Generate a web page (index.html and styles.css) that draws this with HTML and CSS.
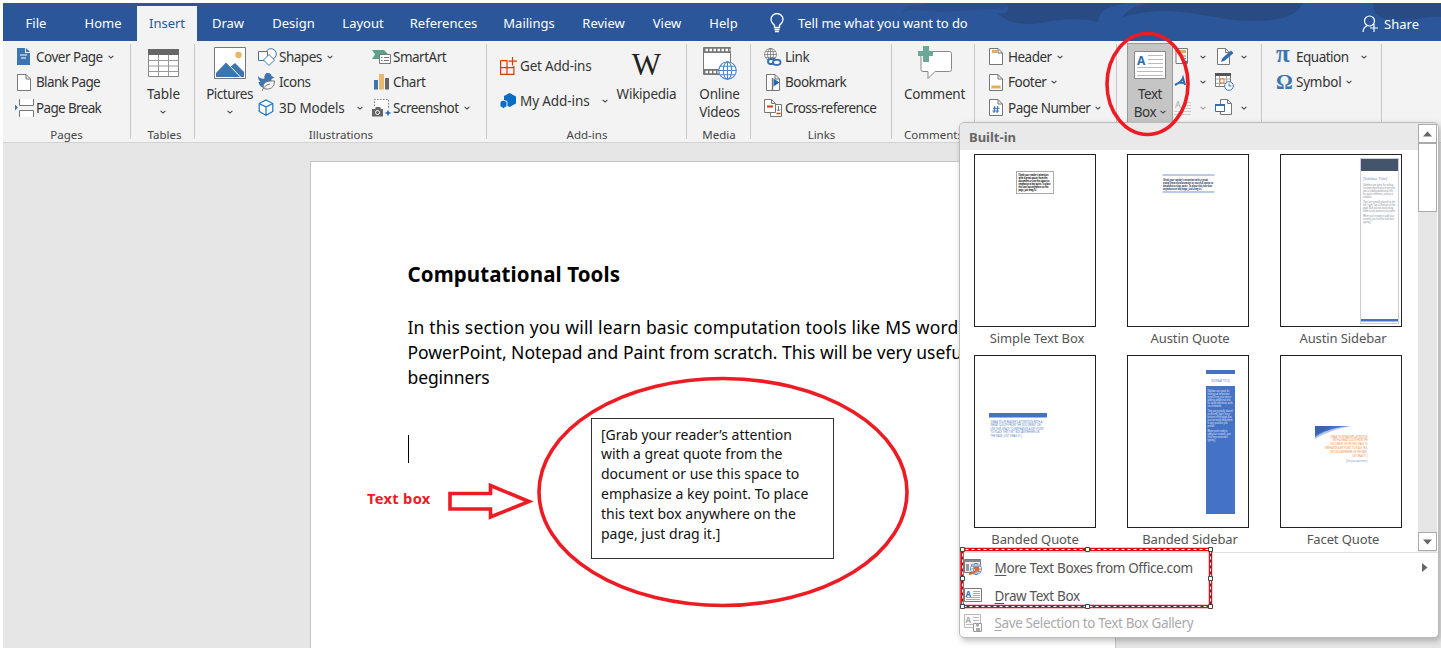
FILE: index.html
```html
<!DOCTYPE html>
<html lang="en">
<head>
<meta charset="utf-8">
<title>Computational Tools</title>
<link rel="stylesheet" href="styles.css">
</head>
<body>
<svg width="0" height="0" class="defs">
  <symbol id="caret" viewBox="0 0 6 4"><path d="M.6.8 3 3.1 5.400.8" fill="none" stroke="#444" stroke-width="1.1"/></symbol>
  <symbol id="doc" viewBox="0 0 14 17"><path d="M.5.5h8.500l4.500 4.500v11.500H.5zM9 .5V5h4.500" fill="#fff" stroke="#777"/></symbol>
  <symbol id="globe" viewBox="0 0 18 18"><circle cx="9" cy="9" r="8.300" fill="#fff"/><g fill="none" stroke="currentColor"><circle cx="9" cy="9" r="8.300"/><ellipse cx="9" cy="9" rx="4" ry="8.300"/><path d="M9 .7v16.600M.7 9h16.600M2 5h14M2 13h14"/></g></symbol>
</svg>
<div class="app">
  <nav class="tabs">
    <span class="tab w66">File</span><span class="tab w68">Home</span><span class="tab w60 active">Insert</span><span class="tab w62">Draw</span><span class="tab w69">Design</span><span class="tab w70">Layout</span><span class="tab w91">References</span><span class="tab w80">Mailings</span><span class="tab w69">Review</span><span class="tab w58">View</span><span class="tab w55">Help</span>
    <svg class="bulb" width="14" height="20" viewBox="0 0 14 20"><path d="M4.500 14.500v-2C3 10.500 1 9.500 1 6.500a6 6 0 0 1 12 0c0 3-2 4-3.500 6v2zM4.500 16.500h5M5 18.500h4" fill="none" stroke="#fff" stroke-width="1.300"/></svg>
    <span class="tell">Tell me what you want to do</span>
    <svg class="share-icon" width="17" height="18" viewBox="0 0 17 18"><g fill="none" stroke="#fff" stroke-width="1.200"><circle cx="7.500" cy="6" r="5"/><path d="M1 17c0-3 1.500-5 4-6.300M12 9v8M8 13h8"/></g></svg>
    <span class="share">Share</span>
    <svg class="swirl" width="540" height="38" viewBox="0 0 540 38"><g fill="#284b84"><path d="M1 9C3 3 12 2 22 2L30 0h78l-6 7C80 4 60 9 40 9 28 9 12 5 1 9z" opacity=".6"/><path d="M97 10c6 2 14-1 8-10h120c-12 3-26 4-28 19-20-5-40-2-58 1-22 3-36-2-42-10z"/><path d="M221 15C225 6 240 0 255 0h146c-2 9-14 17-42 18-30 2-60-9-92-10-18 0-34 2-46 7z"/><path d="M472 0h68v14c-14-1-24 3-36 3-18 1-33-2-32-17z"/></g></svg>
  </nav>

  <section class="ribbon">
    <div class="group pages">
      <div class="rows">
        <div class="row"><i class="in"><svg width="14" height="17" viewBox="0 0 14 17"><path d="M0 0h8v5h5v12H0z" fill="#3d75b0"/><path d="M9 0l4 4H9z" fill="#3d75b0"/><path d="M3 7h7M4 10h5" stroke="#fff"/></svg></i><b>Cover Page</b><svg class="c"><use href="#caret"/></svg></div>
        <div class="row"><i class="in"><svg width="14" height="17"><use href="#doc"/></svg></i><b class="tight">Blank Page</b></div>
        <div class="row"><i><svg width="19" height="18" viewBox="0 0 19 18"><path d="M4.500 0v6.500h14V0M4.500 18v-6.500h14V18" fill="#fff" stroke="#777"/><path d="M0 5.500 3 8.500 0 11.500z" fill="#3d75b0"/></svg></i><b class="tight">Page Break</b></div>
      </div>
      <h2>Pages</h2>
    </div>
    <div class="group tables">
      <div class="big"><div class="art"><svg width="31" height="28" viewBox="0 0 31 28"><path d="M.5.5h30v27H.5z" fill="#fff" stroke="#888"/><path d="M0 0h31v6H0z" fill="#666"/><path d="M.5 11.500h30M.5 17h30M.5 22.500h30M10.500 6v21M20.500 6v21" stroke="#999"/></svg></div><b class="nat">Table</b><svg class="c"><use href="#caret"/></svg></div>
      <h2>Tables</h2>
    </div>
    <div class="group illus">
      <div class="big"><div class="art"><svg width="32" height="32" viewBox="0 0 32 32"><path d="M.5.500h31v31H.5z" fill="#fff" stroke="#777"/><circle cx="24.500" cy="8" r="3.200" fill="#eab566"/><path d="M2 30V26L12 15.500 26 30z" fill="#3d75b0"/><path d="M16 20l5-4 9 9v5h-5z" fill="#3d75b0"/><path d="M16.500 19.500l10 10.500" stroke="#fff" fill="none"/></svg></div><b>Pictures</b><svg class="c"><use href="#caret"/></svg></div>
      <div class="rows c2">
        <div class="row"><i><svg width="19" height="18" viewBox="0 0 19 18"><g fill="#fff" stroke="#3d75b0"><circle cx="13" cy="6" r="5.300"/><path d="M.5 3.500h9v9h-9z"/><path d="M11 6.500l5.500 5.500-5.500 5.500L5.500 12z"/></g></svg></i><b>Shapes</b><svg class="c"><use href="#caret"/></svg></div>
        <div class="row"><i><svg width="18" height="18" viewBox="0 0 18 18"><path d="M0 3c2 2.500 4 3 6.500 2.500C6 2 7.500 0 10 0s3.500 1.500 3.500 3l3 1.500-3 1.500C14 12 11 15 8 15 3 15 1 12 .5 9h2C1 7.500 0 6 0 3z" fill="#3d75b0"/><path d="M5.500 15.500C4 10 8 7.500 16.500 8c0 6-4 9.500-11 7.500zM4 18c1.500-4 4-6 8-7" fill="#f3f3f3" stroke="#777"/></svg></i><b>Icons</b></div>
        <div class="row"><i><svg width="16" height="17" viewBox="0 0 16 17"><path d="M8 1l6.800 3.500v8L8 16.300 1.200 12.500v-8zM1.200 4.500 8 8l6.800-3.500M8 8v8" fill="#fff" stroke="#1a73c0" stroke-width="1.200"/></svg></i><b class="models">3D Models</b><svg class="c far"><use href="#caret"/></svg></div>
      </div>
      <div class="rows c3">
        <div class="row"><i><svg width="19" height="14" viewBox="0 0 19 14"><path d="M0 0h12l4 4-3 5H0l3-4.500z" fill="#5ca28b"/><path d="M7.500 4.500h11v9h-11z" fill="#fff" stroke="#777"/><path d="M9 7.500h1.500M12 7.500h5M9 10.500h1.500M12 10.500h5" stroke="#777"/></svg></i><b>SmartArt</b></div>
        <div class="row"><i class="in"><svg width="15" height="16" viewBox="0 0 15 16"><path d="M0 6h4v9.500H0z" fill="#3d75b0"/><path d="M5 0h5v15.500H5z" fill="#e9b96e"/><path d="M11 4h4v11.500h-4z" fill="#666"/></svg></i><b>Chart</b></div>
        <div class="row"><i><svg width="19" height="18" viewBox="0 0 19 18"><path d="M2.500 7V.5h14V10" fill="#fff" stroke="#777" stroke-dasharray="1.500 1.500"/><path d="M0 10h3l1-2h4l1 2h2v7.500H0z" fill="#666"/><circle cx="5.500" cy="13.500" r="2" fill="#666" stroke="#fff"/><path d="M16 11.500v5M13.500 14h5" stroke="#2468b0" stroke-width="1.500"/></svg></i><b>Screenshot</b><svg class="c"><use href="#caret"/></svg></div>
      </div>
      <h2>Illustrations</h2>
    </div>
    <div class="group addins">
      <div class="rows two">
        <div class="row"><i><svg width="17" height="18" viewBox="0 0 17 18"><path d="M.6 3.600h6.400v13.800M.6 3.600v13.800h13.300v-6.800H.6M7 10.600V17M13.900 10.600V9M12.500 0v8.500M8.500 4.200h8.500" fill="none" stroke="#d83b01" stroke-width="1.200"/></svg></i><b class="ga1">Get Add-ins</b></div>
        <div class="row"><i><svg width="17" height="17" viewBox="0 0 17 17"><path d="M9.500 1l6.500 3.500v7L9.500 15 4 12V4z" fill="#0a6cc4"/><path d="M0 9.500l3-1.500 4 1.500v5L3.500 16.500 0 14.500z" fill="#0a6cc4" stroke="#f3f3f3"/></svg></i><b class="nat">My Add-ins</b><svg class="c far"><use href="#caret"/></svg></div>
      </div>
      <div class="big wiki"><div class="art"><span class="w">W</span></div><b class="slim">Wikipedia</b></div>
      <h2>Add-ins</h2>
    </div>
    <div class="group media">
      <div class="big"><div class="art"><svg width="34" height="33" viewBox="0 0 34 33"><path d="M.5.5h27v27H.5z" fill="#fff" stroke="#777"/><path d="M1 3h26M1 25h18" stroke="#777" stroke-width="4"/><path d="M2.500 3h25M2.500 25h18" stroke="#fff" stroke-width="2.500" stroke-dasharray="2.500 1.500"/><path d="M0 5.500h28M0 22.500h16" stroke="#777"/><svg x="15" y="14" width="19" height="19" color="#4f86bd"><use href="#globe"/></svg></svg></div><b class="slim">Online</b><b class="slim">Videos</b></div>
      <h2>Media</h2>
    </div>
    <div class="group links">
      <div class="rows">
        <div class="row"><i><svg width="18" height="18" viewBox="0 0 18 18"><svg width="13" height="13" color="#666"><use href="#globe"/></svg><g fill="#f3f3f3" stroke="#2f6fb0" stroke-width="1.800"><rect x="4" y="11" width="7.500" height="5" rx="2.500"/><rect x="9" y="11.800" width="7.500" height="5" rx="2.500"/></g></svg></i><b>Link</b></div>
        <div class="row"><i class="in"><svg width="14" height="17"><use href="#doc"/><path d="M6.500 4v12" stroke="#777" stroke-width="1.400"/><path d="M7.500 4.500l6 4-6 4z" fill="#2468b0"/></svg></i><b>Bookmark</b></div>
        <div class="row"><i><svg width="18" height="18" viewBox="0 0 18 18"><path d="M6.500 5.500h11v12h-11z" fill="#fff" stroke="#777"/><path d="M.5.5h7l4 4v9H.5zM7.500.5v4h4" fill="#fff" stroke="#777"/><path d="M3 7.500h6" stroke="#d83b01" stroke-width="2"/><path d="M12.500 14.500h4" stroke="#d83b01" stroke-width="1.500"/><path d="M14.500 7v5l-1.500-1.500m1.500 1.500 1.500-1.500" stroke="#777" fill="none"/></svg></i><b class="cross">Cross-reference</b></div>
      </div>
      <h2>Links</h2>
    </div>
    <div class="group comments">
      <div class="big"><div class="art"><svg width="34" height="34" viewBox="0 0 34 34"><path d="M3.500 5.500h28a2 2 0 0 1 2 2v16a2 2 0 0 1-2 2H17l-7 7v-7H5a2 2 0 0 1-2-2V5.500z" fill="#fff" stroke="#888"/><path d="M5 0h6v5h4v5h-4v6H5v-6H0V5h5z" fill="#6ca898"/></svg></div><b class="slim">Comment</b></div>
      <h2>Comments</h2>
    </div>
    <div class="group headfoot">
      <div class="rows">
        <div class="row"><i><svg width="14" height="17"><use href="#doc"/><path d="M3 3.500h5" stroke="#e8ad52" stroke-width="3"/></svg></i><b>Header</b><svg class="c"><use href="#caret"/></svg></div>
        <div class="row"><i><svg width="14" height="17"><use href="#doc"/><path d="M2.500 13h9" stroke="#e8ad52" stroke-width="3"/></svg></i><b>Footer</b><svg class="c"><use href="#caret"/></svg></div>
        <div class="row"><i><svg width="14" height="17"><use href="#doc"/><path d="M5.800 7 5 14M8.800 7 8 14M4 9.300h6.500M3.500 12H10" stroke="#2f6fb0"/></svg></i><b>Page Number</b><svg class="c"><use href="#caret"/></svg></div>
      </div>
    </div>
    <div class="group text">
      <div class="big pressed"><div class="art"><svg width="32" height="28" viewBox="0 0 32 28"><path d="M.5.5h31v27H.5z" fill="#fff" stroke="#888"/><text x="3" y="14" class="ga">A</text><path d="M14 4.500h15M14 8.500h15M14 12.500h15M3 16.500h26M3 20.500h26M3 24.500h26" stroke="#bbb"/></svg></div><b>Text</b><b>Box <svg class="c"><use href="#caret"/></svg></b></div>
      <div class="rows small">
        <div class="row"><i><svg width="17" height="17" viewBox="0 0 17 17"><path d="M2 .5h11.500v15H2z" fill="#fff" stroke="#777"/><path d="M1 3.500h11" stroke="#e8ad52" stroke-width="3"/><path d="M6 8h6M7 10.500h5" stroke="#777"/><path d="M8 14h5" stroke="#3d75b0" stroke-width="2.500"/></svg></i><svg class="c"><use href="#caret"/></svg></div>
        <div class="row"><i><svg width="17" height="17" viewBox="0 0 17 17"><path d="M1 11C5 9 8 7 9 4l2 7M5 8.500l5 .5" fill="none" stroke="#2f6fb0" stroke-width="2"/></svg></i><svg class="c"><use href="#caret"/></svg></div>
        <div class="row"><i><svg width="17" height="19" viewBox="0 0 17 19"><text x="1" y="10" class="dim">A</text><path d="M9 4.500h8M9 7.500h8M9 10.500h8M0 13.500h17M0 16.500h17" stroke="#ccc"/></svg></i><svg class="c light"><use href="#caret"/></svg></div>
      </div>
      <div class="rows small s2">
        <div class="row"><i class="in"><svg width="17" height="17" viewBox="0 0 17 17"><path d="M.5.5h8l4 4v12H.5zM8.500.5v4h4" fill="#fff" stroke="#777"/><path d="M4 14l1.500-4L14 2.500 16.500 5 8 12.500z" fill="#2f6fb0"/></svg></i><svg class="c"><use href="#caret"/></svg></div>
        <div class="row"><i><svg width="19" height="18" viewBox="0 0 19 18"><path d="M.5.5h15v13H.5z" fill="#fff" stroke="#777"/><path d="M0 1.500h16" stroke="#555" stroke-width="3"/><path d="M4.500 3v10M11.500 3v10M1 6h14M1 10.500h14" stroke="#aaa"/><path d="M5 6h4v4H5z" fill="#fff" stroke="#e07020"/><circle cx="14" cy="13" r="4.300" fill="#fff" stroke="#3d75b0"/><path d="M14 10.500V13h2.500" stroke="#3d75b0" fill="none"/></svg></i></div>
        <div class="row"><i><svg width="17" height="17" viewBox="0 0 17 17"><path d="M5.500.5h7l4 4v11h-11zM12.500.5v4h4" fill="#fff" stroke="#777"/><path d="M.5 5.500h9v7h-9z" fill="#fff" stroke="#2f6fb0"/><path d="M0 6h10" stroke="#2f6fb0" stroke-width="2"/></svg></i><svg class="c"><use href="#caret"/></svg></div>
      </div>
    </div>
    <div class="group symbols">
      <div class="rows">
        <div class="row"><i class="sym pi">π</i><b>Equation</b><svg class="c far"><use href="#caret"/></svg></div>
        <div class="row"><i class="sym">Ω</i><b class="slim">Symbol</b><svg class="c"><use href="#caret"/></svg></div>
      </div>
    </div>
  </section>

  <main class="workspace">
    <article class="page">
      <h1>Computational Tools</h1>
      <p class="body"><span class="l1">In this section you will learn basic computation tools like MS word,</span><br><span class="l2">PowerPoint, Notepad and Paint from scratch. This will be very useful</span><br><span class="l3">beginners</span></p>
      <div class="cursor"></div>
    </article>
  </main>

  <div class="quote">[Grab your reader’s attention<br>with a great quote from the<br>document or use this space to<br>emphasize a key point. To place<br>this text box anywhere on the<br>page, just drag it.]</div>
  <div class="note">Text box</div>

  <aside class="menu">
    <div class="menu-top">
      <div class="gallery">
        <h3>Built-in</h3>
        <div class="grid">
          <figure><svg width="122" height="173"><rect x="41.500" y="16.500" width="37" height="22" fill="#fff" stroke="#aaa"/><g class="t k"><text x="43.500" y="20.500" textLength="30" lengthAdjust="spacingAndGlyphs">[Grab your reader's attention</text><text x="43.500" y="23.600" textLength="29" lengthAdjust="spacingAndGlyphs">with a great quote from the</text><text x="43.500" y="26.700" textLength="31" lengthAdjust="spacingAndGlyphs">document or use this space to</text><text x="43.500" y="29.800" textLength="32" lengthAdjust="spacingAndGlyphs">emphasize a key point. To place</text><text x="43.500" y="32.900" textLength="30" lengthAdjust="spacingAndGlyphs">this text box anywhere on the</text><text x="43.500" y="36" textLength="18" lengthAdjust="spacingAndGlyphs">page, just drag it.]</text></g></svg><figcaption>Simple Text Box</figcaption></figure>
          <figure><svg width="122" height="173"><path d="M34.500 20h52M34.500 37h52" stroke="#a3bbe2" stroke-width="1.500"/><g class="t n"><text x="35" y="25.500" textLength="45" lengthAdjust="spacingAndGlyphs">[Grab your reader's attention with a great</text><text x="35" y="28.800" textLength="50" lengthAdjust="spacingAndGlyphs">quote from the document or use this space to</text><text x="35" y="32.100" textLength="49" lengthAdjust="spacingAndGlyphs">emphasize a key point. To place this text box</text><text x="35" y="35.300" textLength="39" lengthAdjust="spacingAndGlyphs">anywhere on the page, just drag it.]</text></g></svg><figcaption>Austin Quote</figcaption></figure>
          <figure><svg width="122" height="173"><rect x="79.500" y="3.500" width="38" height="165" fill="#fff" stroke="#ccd"/><path d="M80 4h37v12H80z" fill="#44546a"/><path d="M80 164h37v2.500H80z" fill="#4472c4"/><text x="82" y="25" class="ti" textLength="24" lengthAdjust="spacingAndGlyphs">[Sidebar Title]</text><g class="t g"><text x="82" y="30.500" textLength="30" lengthAdjust="spacingAndGlyphs">[Sidebars are great for calling</text><text x="82" y="33.500" textLength="32" lengthAdjust="spacingAndGlyphs">out important points from your</text><text x="82" y="36.500" textLength="30" lengthAdjust="spacingAndGlyphs">text or adding additional info</text><text x="82" y="39.500" textLength="30" lengthAdjust="spacingAndGlyphs">for quick reference, such as a</text><text x="82" y="42.500" textLength="9" lengthAdjust="spacingAndGlyphs">schedule.</text><text x="82" y="47.500" textLength="32" lengthAdjust="spacingAndGlyphs">They are typically placed on the</text><text x="82" y="50.500" textLength="32" lengthAdjust="spacingAndGlyphs">left, right, top or bottom of the</text><text x="82" y="53.500" textLength="30" lengthAdjust="spacingAndGlyphs">page. But you can easily drag</text><text x="82" y="56.500" textLength="32" lengthAdjust="spacingAndGlyphs">them to any position you prefer.</text><text x="82" y="61.500" textLength="31" lengthAdjust="spacingAndGlyphs">When you're ready to add your</text><text x="82" y="64.500" textLength="31" lengthAdjust="spacingAndGlyphs">content, just click here and start</text><text x="82" y="67.500" textLength="8" lengthAdjust="spacingAndGlyphs">typing.]</text></g></svg><figcaption>Austin Sidebar</figcaption></figure>
          <figure><svg width="122" height="173"><path d="M14 57h58v4.500H14z" fill="#4472c4"/><g class="t b"><text x="15.500" y="66.500" textLength="52" lengthAdjust="spacingAndGlyphs">[GRAB YOUR READER'S ATTENTION WITH A</text><text x="15.500" y="70" textLength="50" lengthAdjust="spacingAndGlyphs">GREAT QUOTE FROM THE DOCUMENT OR</text><text x="15.500" y="73.500" textLength="54" lengthAdjust="spacingAndGlyphs">USE THIS SPACE TO EMPHASIZE A KEY POINT.</text><text x="15.500" y="77" textLength="49" lengthAdjust="spacingAndGlyphs">TO PLACE THIS TEXT BOX ANYWHERE ON</text><text x="15.500" y="80.500" textLength="31" lengthAdjust="spacingAndGlyphs">THE PAGE, JUST DRAG IT.]</text></g></svg><figcaption class="bq">Banded Quote</figcaption></figure>
          <figure><svg width="122" height="173"><path d="M78 14h29v4H78zM78 30h29v128H78z" fill="#4472c4"/><g class="t b"><text x="83" y="25.500" textLength="19" lengthAdjust="spacingAndGlyphs">[SIDEBAR TITLE]</text></g><g class="t l"><text x="79.500" y="36" textLength="22" lengthAdjust="spacingAndGlyphs">[Sidebars are great for</text><text x="79.500" y="39" textLength="22" lengthAdjust="spacingAndGlyphs">calling out important</text><text x="79.500" y="42" textLength="24" lengthAdjust="spacingAndGlyphs">points from your text or</text><text x="79.500" y="45" textLength="23" lengthAdjust="spacingAndGlyphs">adding additional info</text><text x="79.500" y="48" textLength="25" lengthAdjust="spacingAndGlyphs">for quick reference, such</text><text x="79.500" y="51" textLength="14" lengthAdjust="spacingAndGlyphs">as a schedule.</text><text x="79.500" y="56" textLength="25" lengthAdjust="spacingAndGlyphs">They are typically placed</text><text x="79.500" y="59" textLength="23" lengthAdjust="spacingAndGlyphs">on the left, right, top or</text><text x="79.500" y="62" textLength="24" lengthAdjust="spacingAndGlyphs">bottom of the page. But</text><text x="79.500" y="65" textLength="25" lengthAdjust="spacingAndGlyphs">you can easily drag them</text><text x="79.500" y="68" textLength="20" lengthAdjust="spacingAndGlyphs">to any position you</text><text x="79.500" y="71" textLength="7" lengthAdjust="spacingAndGlyphs">prefer.</text><text x="79.500" y="76" textLength="20" lengthAdjust="spacingAndGlyphs">When you're ready to</text><text x="79.500" y="79" textLength="23" lengthAdjust="spacingAndGlyphs">add your content, just</text><text x="79.500" y="82" textLength="20" lengthAdjust="spacingAndGlyphs">click here and start</text><text x="79.500" y="85" textLength="8" lengthAdjust="spacingAndGlyphs">typing.]</text></g></svg><figcaption>Banded Sidebar</figcaption></figure>
          <figure><svg width="122" height="173"><path d="M34 70h37C54 73 42 78 34 83z" fill="#b4c7e7"/><path d="M34 70h33C51 72 41 76 34 81z" fill="#4472c4"/><path d="M34 70h18L34 79z" fill="#3864b4"/><g class="t o"><text x="49.500" y="81.500" textLength="37" lengthAdjust="spacingAndGlyphs">[GRAB YOUR READER'S ATTENTION</text><text x="52" y="85.300" textLength="34.500" lengthAdjust="spacingAndGlyphs">WITH A GREAT QUOTE FROM THE</text><text x="49.500" y="89.100" textLength="37" lengthAdjust="spacingAndGlyphs">DOCUMENT OR USE THIS SPACE TO</text><text x="44" y="93" textLength="42.500" lengthAdjust="spacingAndGlyphs">EMPHASIZE A KEY POINT. TO PLACE THIS</text><text x="49" y="96.800" textLength="37.500" lengthAdjust="spacingAndGlyphs">TEXT BOX ANYWHERE ON THE PAGE,</text><text x="71" y="100.700" textLength="15.500" lengthAdjust="spacingAndGlyphs">JUST DRAG IT.]</text></g><g class="t b"><text x="65" y="105.500" textLength="21.500" lengthAdjust="spacingAndGlyphs">[Cite your source here.]</text></g></svg><figcaption>Facet Quote</figcaption></figure>
        </div>
      </div>
      <div class="scroll"><span class="btn"><svg width="9" height="6"><path d="M0 5.500 4.500.5 9 5.500z" fill="#666"/></svg></span><span class="thumb"></span><span class="btn down"><svg width="9" height="6"><path d="M0 .5 4.500 5.500 9 .5z" fill="#666"/></svg></span></div>
    </div>
    <ul class="cmds">
      <li><i><svg width="18" height="17" viewBox="0 0 18 17"><path d="M.5.500h16v13H.5z" fill="#eee" stroke="#777"/><path d="M0 2h17" stroke="#888" stroke-width="2"/><path d="M2 5h3v7H2zM7 5h4v7H7z" fill="#999"/><svg x="6" y="4" width="12" height="12" color="#3d75b0"><use href="#globe"/></svg><path d="M5 15c4 0 6-2 8-5M10 9l4-.5.5 4" fill="none" stroke="#e8602c" stroke-width="2"/></svg></i><b class="m1"><u>M</u>ore Text Boxes from Office.com</b><svg class="arrow" width="6" height="9"><path d="M0 0l5.500 4.500L0 9z" fill="#666"/></svg></li>
      <li><i><svg width="18" height="15" viewBox="0 0 18 15"><path d="M.5.500h17v13H.5z" fill="#fff" stroke="#777"/><text x="1.500" y="8.500" class="a9">A</text><path d="M9 3.500h7M9 5.500h7M9 7.500h7M2 9.500h14M2 11.500h14" stroke="#aaa"/></svg></i><b class="m2"><u>D</u>raw Text Box</b></li>
      <li class="off"><i><svg width="18" height="18" viewBox="0 0 18 18"><path d="M.5.500h16v13H.5z" fill="#fafafa" stroke="#bbb"/><text x="1.500" y="9" class="a9 gray">A</text><path d="M9 3.500h6M9 6.500h6M2 10.500h7" stroke="#bbb"/><path d="M9.500 9.500h8v8h-8z" fill="#fff" stroke="#999"/><path d="M12 9.500h3v3h-3zM12 14h4v3h-4z" fill="#aaa"/></svg></i><b class="m3"><u>S</u>ave Selection to Text Box Gallery</b></li>
    </ul>
  </aside>

  <svg class="marks" width="1441" height="648">
    <g fill="none" stroke="#ed1c24" stroke-width="3.600">
      <ellipse cx="723" cy="492" rx="184" ry="113.500"/>
      <ellipse cx="1147.500" cy="84" rx="40.500" ry="50.500"/>
      <path d="M450 493.500h40.500v-8L529 501.500l-38.500 15.500v-8H450z"/>
      <rect x="145" y="9" width="48" height="26.500" stroke-width="4"/>
    </g>
    <rect x="962" y="549.500" width="248.500" height="57" fill="none" stroke="#e0101c" stroke-width="3.500"/>
    <rect x="962.500" y="549.500" width="248" height="57" fill="none" stroke="#fff" stroke-width="1"/>
    <rect x="962.500" y="549.500" width="248" height="57" fill="none" stroke="#333" stroke-width="1" stroke-dasharray="3 3"/>
    <path d="M960.500 547.500h4v4h-4zM1085.500 547.500h4v4h-4zM1208.500 547.500h4v4h-4zM960.500 576.500h4v4h-4zM1208.500 576.500h4v4h-4zM960.500 604.500h4v4h-4zM1085.500 604.500h4v4h-4zM1208.500 604.500h4v4h-4z" fill="#fff" stroke="#444"/>
  </svg>
</div>
</body>
</html>
```
FILE: styles.css
```css
* { box-sizing: border-box; }
body { margin: 0; background: #fff; font-family: "Noto Sans", "Open Sans", sans-serif; color: #333; }
b { font-weight: 400; }
i { font-style: normal; }
h1, h2, h3, p, ul, figure { margin: 0; padding: 0; }
.defs { position: absolute; }
.app { position: relative; width: 1441px; height: 648px; overflow: hidden; padding: 3px 0 0 3px; display: flex; flex-direction: column; }

.tabs { position: relative; height: 38px; display: flex; align-items: center; background: #2b579a; color: #fff; font-size: 13px; flex: none; }
.tab { text-align: center; height: 38px; line-height: 41px; white-space: nowrap; position: relative; z-index: 1; }
.active { background: #f3f3f3; color: #2b579a; height: 35px; line-height: 35px; margin-top: 3px; }
.w55 { width: 55px; } .w58 { width: 58px; } .w60 { width: 60px; } .w62 { width: 62px; } .w66 { width: 66px; } .w68 { width: 68px; }
.w69 { width: 69px; } .w70 { width: 70px; } .w80 { width: 80px; } .w91 { width: 91px; }
.bulb { margin: 2px 0 0 19px; z-index: 1; }
.tell { margin: 2px auto 0 14px; z-index: 1; white-space: nowrap; letter-spacing: -.07px; }
.share-icon { margin-top: 4px; z-index: 1; }
.share { margin: 3px 22px 0 5px; z-index: 1; }
.swirl { position: absolute; right: 0; top: 0; }

.ribbon { height: 102px; flex: none; display: flex; background: #f3f3f3; border-bottom: 1px solid #d2d2d2; font-size: 13.5px; white-space: nowrap; }
.ribbon b { letter-spacing: -.5px; }
.ribbon .slim { letter-spacing: -.25px; }
.ribbon .tight { letter-spacing: -.65px; }
.ribbon .cross { letter-spacing: -.57px; }
.ribbon .nat { letter-spacing: -.1px; }
.ribbon .ga1 { letter-spacing: -.2px; }
.ribbon .models { letter-spacing: -.2px; }
.group { position: relative; display: flex; align-items: flex-start; flex: none; padding-bottom: 17px; }
.group::after { content: ""; position: absolute; right: 1px; top: 3px; width: 1px; height: 95px; background: #c8c8c8; }
.group h2 { position: absolute; left: 0; right: 2px; bottom: -1px; text-align: center; font-size: 11.500px; line-height: 16px; font-weight: 400; color: #444; }
.rows { display: grid; grid-auto-rows: 25.500px; padding-top: 3px; }
.row { display: flex; align-items: center; }
.row i { display: flex; flex: none; width: 21px; }
.row .in { padding-left: 2px; }
.c { width: 6px; height: 4px; flex: none; margin-left: 5px; }
.big { display: flex; flex-direction: column; align-items: center; line-height: 18px; }
.art { height: 44px; display: flex; align-items: center; justify-content: center; }
.big .c { margin: 7px 0 0; }
.pages { width: 129px; padding-left: 12px; } .tables { width: 64px; padding-left: 15px; } .illus { width: 292px; } .addins { width: 200px; } .media { width: 64px; }
.tables h2 { left: 1px; right: 0; }
.links { width: 141px; padding-left: 12px; } .comments { width: 83px; padding-left: 11px; } .headfoot { width: 142px; padding-left: 13px; } .text { width: 145px; } .symbols { width: 120px; padding-left: 13px; }
.illus .big { width: 67px; }
.c2 { margin-left: -5px; width: 114px; }
.far { margin-left: 12.500px; }
.two { grid-auto-rows: 34.500px; padding: 8px 0 0 12px; width: 124px; }
.two .row i { width: 20px; }
.wiki { width: 69px; }
.w { font: 31px/28px "Liberation Serif", serif; color: #222; margin-top: 4px; }
.media .big { width: 63px; }
.headfoot .row i { width: 19px; }
.headfoot::after, .text::after, .symbols::after { height: 78px; }
.pressed { margin: 2px 0 0 9px; width: 46px; height: 80px; background: #c5c5c5; border: 1px solid #999; }
.pressed .art { height: 41px; }
.pressed .c { margin: 0 0 3px 1px; }
.ga { font: bold 12px "Noto Sans", sans-serif; fill: #2f6fb0; }
.dim { font: 9px "Noto Sans", sans-serif; fill: #aaa; }
.small { margin-left: 1px; }
.small .row i { width: 20.500px; }
.s2 { margin-left: 9px; }
.s2 .row i { width: 21px; }
.light { opacity: .5; }
.symbols .row i { width: 20px; }
.sym { font: bold 21px/20px "Liberation Serif", serif; color: #3d75b0; }
.symbols .pi { font-size: 25px; padding-bottom: 5px; }

.workspace { flex: 1; background: #e6e6e6; padding: 18px 0 0 307px; }
.page { width: 806px; height: 500px; background: #fff; border: 1px solid #c6c6c6; padding: 98px 0 0 96.500px; color: #000; }
.page h1 { font-size: 20.500px; line-height: 28px; letter-spacing: .1px; }
.body { margin-top: 26.500px; font-size: 17.500px; line-height: 25px; white-space: nowrap; }
.l1 { letter-spacing: .18px; }
.l2 { letter-spacing: -.01px; }
.l3 { letter-spacing: -.1px; }
.cursor { width: 1px; height: 28px; background: #000; margin-top: 45px; }
.quote { position: absolute; left: 591px; top: 418px; width: 243px; height: 141px; border: 1px solid #333; background: #fff; padding: 5.500px 9px; font-size: 14px; line-height: 19.900px; color: #111; white-space: nowrap; }
.note { position: absolute; left: 367px; top: 488px; font-size: 14.700px; letter-spacing: .3px; line-height: 20px; font-weight: 700; color: #ed1c24; }

.menu { position: absolute; left: 959px; top: 122px; width: 480px; height: 516px; background: #fff; border: 1px solid #bbb; border-radius: 5px; box-shadow: 2px 3px 6px rgba(0,0,0,.25); color: #555; overflow: hidden; }
.menu-top { display: flex; height: 430px; border-bottom: 1px solid #e1e1e1; }
.gallery { width: 458px; }
.gallery h3 { height: 27px; background: #e9e9e9; font-size: 13px; line-height: 28px; padding-left: 9px; color: #666; }
.grid { display: grid; grid-template-columns: repeat(3, 122px); column-gap: 31px; grid-auto-rows: 201px; padding: 4px 0 0 14px; }
figure > svg { display: block; width: 122px; height: 173px; border: 1px solid #222; border-width: 1px 1.500px 1.500px 1px; }
figcaption { font-size: 13px; line-height: 22px; text-align: center; white-space: nowrap; padding-left: 4px; letter-spacing: -.1px; }
.bq { padding: 0; }
.t { font: 2.900px "Noto Sans", sans-serif; }
.k { fill: #000; font-weight: 700; } .n { fill: #1f3864; font-weight: 700; font-style: italic; } .g { fill: #7b8494; } .b { fill: #6485c4; } .l { fill: #e4ecfa; } .o { fill: #ed8a4c; }
.ti { font: 4px "Noto Sans", sans-serif; fill: #6b8fd0; }
.scroll { width: 19px; background: #e6e6e6; display: flex; flex-direction: column; padding-top: 1px; }
.btn { height: 19px; border: 1px solid #aaa; background: #fff; display: flex; align-items: center; justify-content: center; }
.thumb { height: 69px; border: 1px solid #aaa; background: #fff; }
.down { margin-top: auto; margin-bottom: 1px; }
.cmds { list-style: none; font-size: 13.5px; padding-top: 1px; }
.cmds li { height: 27.800px; display: flex; align-items: center; padding-left: 4px; white-space: nowrap; letter-spacing: -.38px; }
.cmds i { width: 30.500px; display: flex; }
.cmds u { text-underline-offset: 2px; }
.arrow { margin: 0 10px 0 auto; }
.off { color: #aaa; }
.a9 { font: bold 8px "Noto Sans", sans-serif; fill: #2f6fb0; }
.gray { fill: #aaa; }
.marks { position: absolute; left: 0; top: 0; pointer-events: none; }
```
